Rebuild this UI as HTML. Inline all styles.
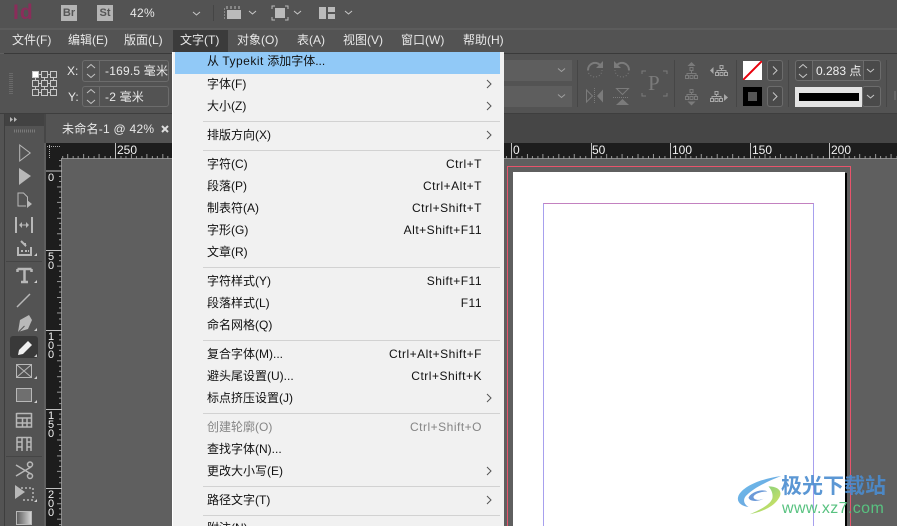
<!DOCTYPE html>
<html><head><meta charset="utf-8"><style>
html{margin:0;padding:0;width:897px;height:526px;overflow:hidden;background:#5f5f5f}
body{margin:0;padding:0;width:897px;height:526px;position:relative;overflow:hidden;background:#5f5f5f;font:12px/16px "Liberation Sans","Noto Sans CJK SC",sans-serif;color:#e8e8e8}
div,svg{position:absolute}
.t{position:absolute;white-space:nowrap}
.mi{position:absolute;left:207px;color:#111;white-space:nowrap;height:16px;line-height:16px}
.sc{position:absolute;right:415px;color:#111;white-space:nowrap;letter-spacing:.5px;line-height:16px;height:16px}
.sep{position:absolute;left:203px;width:297px;height:1px;background:#d2d2d2}
.box{border:1px solid #6c6c6c;border-radius:3px;box-sizing:border-box}
.v{position:absolute;width:1px;background:#464646}
.dig{position:absolute;left:46px;width:10px;text-align:center;font-size:11px;line-height:9px;color:#f0f0f0}
.rl{position:absolute;top:143px;color:#f2f2f2;line-height:14px;font-size:12px}
</style></head><body>
<!-- top bands -->
<div style="left:0;top:0;width:897px;height:28px;background:#535353"></div>
<div style="left:0;top:28px;width:897px;height:2px;background:#5c5c5c"></div>
<div style="left:0;top:30px;width:897px;height:23px;background:#535353"></div>
<div style="left:4px;top:53px;width:893px;height:1px;background:#3a3a3a"></div>
<div style="left:0;top:54px;width:897px;height:59px;background:#535353"></div>
<div style="left:0;top:113px;width:897px;height:1px;background:#3e3e3e"></div>
<div style="left:0;top:114px;width:897px;height:29px;background:#464646"></div>

<!-- app bar -->
<div class="t" style="left:13px;top:0;font:bold 21px/25px 'Liberation Sans',sans-serif;color:#8a2d5a;letter-spacing:1px">Id</div>
<div class="t" style="left:61px;top:5px;width:16px;height:16px;background:#b4b4b4;color:#555;font:bold 11px/16px 'Liberation Sans',sans-serif;text-align:center">Br</div>
<div class="t" style="left:97px;top:5px;width:16px;height:16px;background:#b4b4b4;color:#555;font:bold 11px/16px 'Liberation Sans',sans-serif;text-align:center">St</div>
<div class="t" style="left:130px;top:5px;color:#e8e8e8;font-size:12px;letter-spacing:.3px">42%</div>
<div style="left:213px;top:5px;width:1px;height:16px;background:#454545"></div>
<svg style="left:0;top:0" width="897" height="28" fill="none" stroke="#c8c8c8" stroke-width="1">
<path d="M193 12l3.500 3 3.500-3"/><path d="M249 11l3.500 3 3.500-3"/><path d="M294 11l3.500 3 3.500-3"/><path d="M345 11l3.500 3 3.500-3"/>
<path d="M224 9h1M224 12h1M224 15h1M224 18h1M227 6v3M231 6v3M235 6v3M239 6v3" stroke="#bbb"/>
<rect x="227" y="10" width="14" height="9" fill="#bbb" stroke="none"/>
<path d="M272 9V6h3M285 6h3v3M288 17v3h-3M275 20h-3v-3" stroke="#bbb"/>
<rect x="275" y="8" width="10" height="10" fill="#bbb" stroke="none"/>
<rect x="319" y="7" width="7" height="12" fill="#bbb" stroke="none"/>
<rect x="328" y="7" width="7" height="5" fill="#bbb" stroke="none"/>
<rect x="328" y="14" width="7" height="5" fill="#bbb" stroke="none"/>
</svg>

<!-- menu bar -->
<div style="left:173px;top:30px;width:55px;height:22px;background:#3b3b3b"></div>
<div class="t" style="left:12px;top:32px">文件(F)</div>
<div class="t" style="left:68px;top:32px">编辑(E)</div>
<div class="t" style="left:124px;top:32px">版面(L)</div>
<div class="t" style="left:180px;top:32px">文字(T)</div>
<div class="t" style="left:237px;top:32px">对象(O)</div>
<div class="t" style="left:297px;top:32px">表(A)</div>
<div class="t" style="left:343px;top:32px">视图(V)</div>
<div class="t" style="left:401px;top:32px">窗口(W)</div>
<div class="t" style="left:463px;top:32px">帮助(H)</div>

<!-- control panel left -->
<svg style="left:0;top:54px" width="172" height="60" fill="none">
<path shape-rendering="crispEdges" d="M9 19.500h4M9 21.500h4M9 23.500h4M9 25.500h4M9 27.500h4M9 29.500h4M9 31.500h4M9 33.500h4M9 35.500h4M9 37.500h4M9 39.500h4" stroke="#6a6a6a"/>
<g stroke="#c8c8c8"><rect x="32.500" y="17.500" width="6" height="6" fill="#fff"/><rect x="41.500" y="17.500" width="6" height="6"/><rect x="50.500" y="17.500" width="6" height="6"/><rect x="32.500" y="26.500" width="6" height="6"/><rect x="41.500" y="26.500" width="6" height="6"/><rect x="50.500" y="26.500" width="6" height="6"/><rect x="32.500" y="35.500" width="6" height="6"/><rect x="41.500" y="35.500" width="6" height="6"/><rect x="50.500" y="35.500" width="6" height="6"/>
<path d="M39 20.500h2M48 20.500h2M39 29.500h2M48 29.500h2M39 38.500h2M48 38.500h2M35.500 24v2M44.500 24v2M53.500 24v2M35.500 33v2M44.500 33v2M53.500 33v2"/></g>
</svg>
<div class="t" style="left:67px;top:63px">X:</div>
<div class="t" style="left:68px;top:89px">Y:</div>
<div class="box" style="left:82px;top:60px;width:87px;height:22px"></div>
<div class="box" style="left:82px;top:86px;width:87px;height:21px"></div>
<div style="left:99px;top:61px;width:1px;height:20px;background:#6c6c6c"></div>
<div style="left:99px;top:87px;width:1px;height:19px;background:#6c6c6c"></div>
<svg style="left:83px;top:60px" width="16" height="48" fill="none" stroke="#c4c4c4"><path d="M4 8l4-3.500 4 3.500M4 14l4 3.500 4-3.500M4 33l4-3.500 4 3.500M4 40l4 3.500 4-3.500"/></svg>
<div class="t" style="left:105px;top:63px;letter-spacing:.2px">-169.5 毫米</div>
<div class="t" style="left:105px;top:89px;letter-spacing:.2px">-2 毫米</div>

<!-- control panel right -->
<div style="left:504px;top:60px;width:68px;height:21px;background:#5e5e5e"></div>
<div style="left:504px;top:86px;width:68px;height:21px;background:#5e5e5e"></div>
<div class="v" style="left:577px;top:60px;height:47px"></div>
<div class="v" style="left:674px;top:60px;height:47px"></div>
<div class="v" style="left:736px;top:60px;height:47px"></div>
<div class="v" style="left:788px;top:60px;height:47px"></div>
<div class="v" style="left:886px;top:60px;height:47px"></div>
<svg style="left:500px;top:54px" width="240" height="60" fill="none" stroke="#7b7b7b">
<path d="M58 14.500l3.500 3 3.500-3M58 40.500l3.500 3 3.500-3" stroke="#a0a0a0"/>
<path d="M100 11A7 7 0 0 0 88 16" stroke-width="2"/><path d="M88 16A7 7 0 0 0 102 16" stroke-dasharray="1 2"/><path d="M96 14h7V7z" fill="#7b7b7b" stroke="none"/>
<path d="M117 11A7 7 0 0 1 129 16" stroke-width="2"/><path d="M129 16A7 7 0 0 1 115 16" stroke-dasharray="1 2"/><path d="M121 14h-7V7z" fill="#7b7b7b" stroke="none"/>
<path d="M86.500 36l6 6-6 6z"/><path d="M103 35.500l-6 6.500 6 6.500z" fill="#7b7b7b" stroke="none"/><path d="M94.500 34v16" stroke-dasharray="1 1"/>
<path d="M116.500 34.500h12l-6 6z"/><path d="M116 51h13l-6.500-6z" fill="#7b7b7b" stroke="none"/><path d="M113 43.500h16" stroke-dasharray="1 1"/>
<path d="M142 20v-3h4M163 17h4v3M167 39v3h-4M146 42h-4v-3"/>
<g>
<path d="M187.500 12l4-4 4 4z" fill="#7b7b7b" stroke="none"/>
<path d="M191.500 17v2.500M187 21v-1.500h9V21"/>
<rect x="190" y="13.500" width="3" height="3"/><rect x="185.500" y="21.500" width="3" height="3"/><rect x="190" y="21.500" width="3" height="3"/><rect x="194.500" y="21.500" width="3" height="3"/>
</g>
<g>
<path d="M191.500 39v1.500M187 42v-1.500h9V42"/>
<rect x="190" y="35.500" width="3" height="3"/><rect x="185.500" y="42.500" width="3" height="3"/><rect x="190" y="42.500" width="3" height="3"/><rect x="194.500" y="42.500" width="3" height="3"/>
<path d="M187.500 47.500l4 4 4-4z" fill="#7b7b7b" stroke="none"/>
</g>
<g stroke="#a8a8a8">
<path d="M221.500 15v1.500M217 18v-1.500h9V18"/>
<rect x="220" y="11.500" width="3" height="3"/><rect x="215.500" y="18.500" width="3" height="3"/><rect x="220" y="18.500" width="3" height="3"/><rect x="224.500" y="18.500" width="3" height="3"/>
<path d="M213.500 13v7l-3.500-3.500z" fill="#a8a8a8" stroke="none"/>
</g>
<g stroke="#a8a8a8">
<path d="M216.500 41v1.500M212 44v-1.500h9V44"/>
<rect x="215" y="37.500" width="3" height="3"/><rect x="210.500" y="44.500" width="3" height="3"/><rect x="215" y="44.500" width="3" height="3"/><rect x="219.500" y="44.500" width="3" height="3"/>
<path d="M224 40v7l4-3.500z" fill="#a8a8a8" stroke="none"/>
</g>
</svg>
<div class="t" style="left:648px;top:71px;font:21px/24px 'Liberation Serif',serif;color:#7b7b7b">P</div>
<div style="left:743px;top:61px;width:19px;height:19px;background:#fff;overflow:hidden"></div>
<svg style="left:743px;top:61px" width="19" height="19"><path d="M0 19L19 0" stroke="#e8000c" stroke-width="2"/></svg>
<div style="left:743px;top:87px;width:19px;height:19px;background:#000"></div>
<div style="left:748px;top:92px;width:9px;height:9px;background:#555"></div>
<div class="box" style="left:767px;top:60px;width:16px;height:21px;background:#4a4a4a"></div>
<div class="box" style="left:767px;top:86px;width:16px;height:21px;background:#4a4a4a"></div>
<div class="box" style="left:795px;top:60px;width:86px;height:21px;background:#4a4a4a"></div>
<div style="left:812px;top:61px;width:50px;height:19px;background:#535353;border-left:1px solid #6c6c6c;border-right:1px solid #6c6c6c"></div>
<div class="t" style="left:816px;top:63px;color:#f0f0f0">0.283 点</div>
<div class="box" style="left:862px;top:86px;width:19px;height:21px;background:#4a4a4a"></div>
<div style="left:795px;top:87px;width:67px;height:20px;background:#e4e4e4"></div>
<div style="left:799px;top:93px;width:60px;height:8px;background:#000"></div>
<svg style="left:765px;top:60px" width="132" height="48" fill="none" stroke="#c8c8c8"><path d="M8 6.500l4 4-4 4M8 32.500l4 4-4 4"/><path d="M34 8l4-3.500 4 3.500M34 14l4 3.500 4-3.500M102 9l3.500 3 3.500-3M102 35l3.500 3 3.500-3"/><path d="M130 31v9" stroke="#777"/></svg>

<!-- tab -->
<div style="left:46px;top:114px;width:126px;height:29px;background:#535353"></div>
<div class="t" style="left:62px;top:121px;letter-spacing:.25px">未命名-1 @ 42%</div>
<svg style="left:160px;top:124px" width="10" height="10"><path d="M2 2l6 6M8 2l-6 6" stroke="#ddd" stroke-width="2"/></svg>

<!-- ruler -->
<div style="left:46px;top:143px;width:851px;height:15px;background:#1d1d1d"></div>
<div style="left:46px;top:158px;width:851px;height:1px;background:#8a8a8a"></div>
<div style="left:46px;top:143px;width:15px;height:383px;background:#1d1d1d"></div>
<div style="left:61px;top:158px;width:1px;height:368px;background:#8a8a8a"></div>
<svg style="left:0;top:143px" width="897" height="16">
<defs>
<pattern id="hp" width="79.200" height="16" patternUnits="userSpaceOnUse" x="115.500" y="0">
<path shape-rendering="crispEdges" stroke="#999" fill="none" d="M5.500 13v3M10.500 13v3M16 11v5M21 13v3M26.500 13v3M31.500 11v5M37 13v3M42 13v3M47.500 11v5M52.500 13v3M58 13v3M63 11v5M68.500 13v3M74 13v3"/>
</pattern>
</defs>
<rect x="62" y="0" width="835" height="16" fill="url(#hp)"/>
<path shape-rendering="crispEdges" stroke="#c0c0c0" d="M115.500 0v16M511.500 0v16M591.500 0v16M670.500 0v16M750.500 0v16M829.500 0v16"/>
<path d="M47 3.500h13M49.500 2v13" stroke="#aaa" stroke-dasharray="1 1" fill="none"/>
</svg>
<svg style="left:46px;top:159px" width="16" height="367">
<defs>
<pattern id="vp" width="16" height="79.200" patternUnits="userSpaceOnUse" x="0" y="12">
<path shape-rendering="crispEdges" stroke="#999" fill="none" d="M13 5.500h3M13 10.500h3M11 16h5M13 21h3M13 26.500h3M11 31.500h5M13 37h3M13 42h3M11 47.500h5M13 52.500h3M13 58h3M11 63h5M13 68.500h3M13 74h3"/>
</pattern>
</defs>
<rect width="16" height="367" fill="url(#vp)"/>
<path shape-rendering="crispEdges" stroke="#c0c0c0" d="M0 12h16M0 91.500h16M0 171.500h16M0 250.500h16M0 329.500h16"/>
</svg>
<div class="rl" style="left:117px">250</div>
<div class="rl" style="left:513px">0</div>
<div class="rl" style="left:592px">50</div>
<div class="rl" style="left:672px">100</div>
<div class="rl" style="left:752px">150</div>
<div class="rl" style="left:831px">200</div>
<div class="dig" style="top:174px">0</div>
<div class="dig" style="top:253px">5<br>0</div>
<div class="dig" style="top:333px">1<br>0<br>0</div>
<div class="dig" style="top:412px">1<br>5<br>0</div>
<div class="dig" style="top:491px">2<br>0<br>0</div>

<!-- tool panel -->
<div style="left:0;top:114px;width:4px;height:412px;background:#535353"></div>
<div style="left:4px;top:114px;width:1px;height:412px;background:#3e3e3e"></div>
<div style="left:5px;top:114px;width:39px;height:412px;background:#535353"></div>
<div style="left:5px;top:114px;width:39px;height:12px;background:#424242"></div>
<div style="left:6px;top:261px;width:36px;height:1px;background:#454545"></div>
<div style="left:6px;top:456px;width:36px;height:1px;background:#454545"></div>
<div style="left:10px;top:336px;width:28px;height:22px;background:#393939;border-radius:3px"></div>
<svg style="left:0;top:114px" width="46" height="412" fill="none" stroke="#b8b8b8" stroke-width="1.500">
<path d="M10 3l3 2.500-3 2.500zM14 3l3 2.500-3 2.500z" fill="#b8b8b8" stroke="none"/>
<path d="M14 17h1M16 17h1M18 17h1M20 17h1M22 17h1M24 17h1M26 17h1M28 17h1M30 17h1M32 17h1M34 17h1" stroke="#7a7a7a" stroke-width="3"/>
<path d="M19.700 31l10.500 8-10.500 8z" stroke-width="1"/>
<path d="M19 54l12 8-12 9z" fill="#b8b8b8" stroke="none"/>
<path d="M27.500 88V83l-4-4h-5.500v13h8" stroke-width="1"/><path d="M27 86l5 4-5 4z" fill="#b8b8b8" stroke="none"/>
<path d="M16 103v16M32 103v16" stroke-width="2"/><path d="M20 111h8" stroke-width="1"/><path d="M22 108l-3 3 3 3zM26 108l3 3-3 3z" fill="#b8b8b8" stroke="none"/>
<path d="M18 133v8h13v-8" stroke-width="2"/><path d="M21 127l5 5" stroke-width="2"/><path d="M22 129h4v4z" fill="#b8b8b8" stroke="none"/><path d="M21 137h2M25 137h2M28 137h1M21 135h0" stroke-width="2"/>
<path d="M17.500 155h14M24.500 155v13M21 168h7M17.500 155v3M31.500 155v3" stroke-width="2.500"/>
<path d="M17 193l13-13" stroke-width="1.500"/>
<path d="M20 206l9-5 3 5-4 9-10 3z" fill="#b8b8b8" stroke="none"/><path d="M18.500 218l6-6" stroke="#535353" stroke-width="1"/>
<path d="M18 241l1-5 9-9 4 4-9 9z" fill="#f0f0f0" stroke="none"/>
<rect x="16.500" y="250.500" width="15" height="13" stroke-width="1"/><path d="M17 251l14 12M31 251l-14 12" stroke-width="1"/>
<rect x="16.500" y="274.500" width="15" height="13" fill="#6f6f6f" stroke-width="1"/>
<path d="M16.500 299.500h15M16.500 304h15M16.500 309h15M16.500 299v14h15v-14M22.500 304v9M27 304v9" stroke-width="1.500"/>
<path d="M17 323.500h14M17 323v14M31 323v14M22 323v14M27 323v14M17 328h5M17 333h5M27 328h4M27 333h4" stroke-width="1.500"/>
<path d="M16 351l15 9M16 362l15-9" stroke-width="1.500"/><circle cx="30" cy="350.500" r="2.500"/><circle cx="30" cy="362" r="2.500"/>
<path d="M15 371l10 7-10 7z" fill="#b8b8b8" stroke="none"/>
<path d="M21 374h12v12H21" stroke-dasharray="2 2" stroke-width="1.500"/>
<defs><linearGradient id="g"><stop offset="0" stop-color="#5a5a5a"/><stop offset="1" stop-color="#d8d8d8"/></linearGradient></defs>
<rect x="16.500" y="397.500" width="15" height="13" fill="url(#g)" stroke-width="1"/>
<g fill="#d0d0d0" stroke="none"><path d="M37 142v-3l-3 3zM37 169v-3l-3 3zM37 217v-3l-3 3zM37 243v-3l-3 3zM37 265v-3l-3 3zM37 289v-3l-3 3zM37 388v-3l-3 3z"/></g>
</svg>

<!-- page -->
<div style="left:507px;top:166px;width:344px;height:360px;border:1px solid #e8546c;border-bottom:0;box-sizing:border-box"></div>
<div style="left:513px;top:172px;width:332px;height:354px;background:#fff"></div>
<div style="left:845px;top:173px;width:2px;height:353px;background:#000"></div>
<div style="left:543px;top:203px;width:271px;height:323px;box-sizing:border-box;border-left:1px solid #a7a0ee;border-right:1px solid #a7a0ee;border-top:1px solid #c381c0"></div>

<!-- menu -->
<div style="left:172px;top:52px;width:332px;height:474px;background:#f1f1f1;border-left:1px solid #fff;box-sizing:border-box"></div>
<div style="left:175px;top:52px;width:325px;height:22px;background:#91c9f7"></div>
<div class="mi" style="top:53px">从 <span style="letter-spacing:.5px">Typekit</span> 添加字体...</div>
<div class="mi" style="top:76px">字体(F)</div>
<div class="mi" style="top:98px">大小(Z)</div>
<div class="sep" style="top:121px"></div>
<div class="mi" style="top:127px">排版方向(X)</div>
<div class="sep" style="top:150px"></div>
<div class="mi" style="top:156px">字符(C)</div><div class="sc" style="top:156px">Ctrl+T</div>
<div class="mi" style="top:178px">段落(P)</div><div class="sc" style="top:178px">Ctrl+Alt+T</div>
<div class="mi" style="top:200px">制表符(A)</div><div class="sc" style="top:200px">Ctrl+Shift+T</div>
<div class="mi" style="top:222px">字形(G)</div><div class="sc" style="top:222px">Alt+Shift+F11</div>
<div class="mi" style="top:244px">文章(R)</div>
<div class="sep" style="top:267px"></div>
<div class="mi" style="top:273px">字符样式(Y)</div><div class="sc" style="top:273px">Shift+F11</div>
<div class="mi" style="top:295px">段落样式(L)</div><div class="sc" style="top:295px">F11</div>
<div class="mi" style="top:317px">命名网格(Q)</div>
<div class="sep" style="top:340px"></div>
<div class="mi" style="top:346px">复合字体(M)...</div><div class="sc" style="top:346px">Ctrl+Alt+Shift+F</div>
<div class="mi" style="top:368px">避头尾设置(U)...</div><div class="sc" style="top:368px">Ctrl+Shift+K</div>
<div class="mi" style="top:390px">标点挤压设置(J)</div>
<div class="sep" style="top:413px"></div>
<div class="mi" style="top:419px;color:#858585">创建轮廓(O)</div><div class="sc" style="top:419px;color:#858585">Ctrl+Shift+O</div>
<div class="mi" style="top:441px">查找字体(N)...</div>
<div class="mi" style="top:463px">更改大小写(E)</div>
<div class="sep" style="top:486px"></div>
<div class="mi" style="top:492px">路径文字(T)</div>
<div class="sep" style="top:515px"></div>
<div class="mi" style="top:520px">附注(N)</div>
<svg style="left:480px;top:50px" width="20" height="476" fill="none" stroke="#555"><path d="M7 30l4 4-4 4M7 52l4 4-4 4M7 81l4 4-4 4M7 344l4 4-4 4M7 417l4 4-4 4M7 446l4 4-4 4"/></svg>

<!-- watermark -->
<svg style="left:736px;top:474px" width="50" height="44" fill="none">
<defs><linearGradient id="w1" x1="0" y1="0" x2="1" y2="1"><stop offset="0" stop-color="#6cc0ee"/><stop offset="1" stop-color="#6c9ad8"/></linearGradient>
<linearGradient id="w2" x1="0" y1="0" x2="1" y2="1"><stop offset="0" stop-color="#68c888"/><stop offset="1" stop-color="#e6e85a"/></linearGradient></defs>
<g transform="translate(0 -1) scale(1.250 1.030)">
<path d="M36 3C22 5 6 12 2 22c-2 6 2 10 8 11-4-3-5-8-1-12 6-7 18-14 27-18z" fill="url(#w1)"/>
<path d="M10 24c2-6 12-9 15-6-5 0-10 2-11 5 0 3 4 4 8 2-4 3-11 3-12-1z" fill="#6c9ad8"/>
<path d="M26 13c8 0 12 5 8 12-4 8-14 13-23 15 8-4 16-9 18-15 1-5-1-9-3-12z" fill="url(#w2)"/>
</g>
</svg>
<div class="t" style="left:781px;top:474px;font:bold 21px/26px 'Liberation Sans','Noto Sans CJK SC',sans-serif;color:#4a8cd0;opacity:.9">极光下载站</div>
<div class="t" style="left:782px;top:500px;font:16px/18px 'Liberation Sans',sans-serif;color:#58c280;letter-spacing:.4px">www.xz7.com</div>
</body></html>
